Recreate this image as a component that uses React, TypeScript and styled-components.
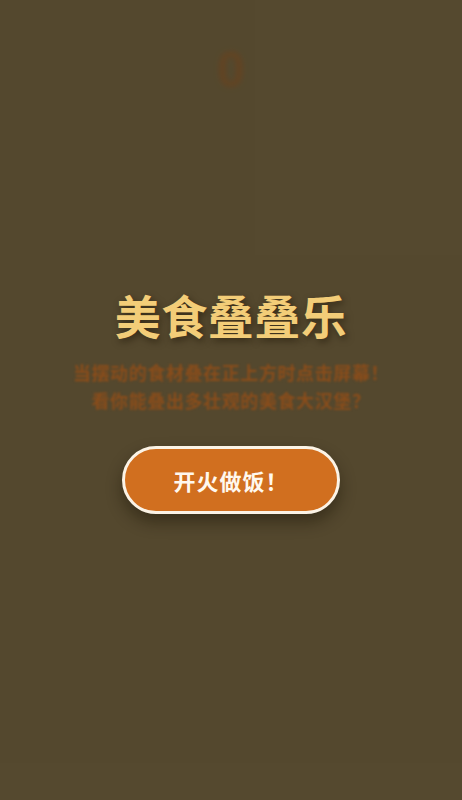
import * as React from 'react'
import styled, { createGlobalStyle } from 'styled-components'

const GlobalStyle = createGlobalStyle`
  html, body {
    margin: 0;
    padding: 0;
    background: #55492e;
  }
  body {
    font-family: "Noto Sans CJK SC", "Noto Sans", sans-serif;
  }
`

export default function App() {
  return (
    <>
      <GlobalStyle />
      <Stage>
        <Game>
          <Score>0</Score>
        </Game>
        <Overlay>
          <Title>美食叠叠乐</Title>
          <Hint>
            当摆动的食材叠在正上方时点击屏幕！
            <br />
            看你能叠出多壮观的美食大汉堡？
          </Hint>
          <StartButton>开火做饭！</StartButton>
        </Overlay>
      </Stage>
    </>
  )
}

const Stage = styled.div`
  position: relative;
  width: 462px;
  height: 800px;
  overflow: hidden;
  background: #574b30;
`

const Game = styled.div`
  display: flex;
  flex-direction: column;
  align-items: center;
  padding-top: 40px;
`

const Score = styled.div`
  font-family: "Liberation Sans", Arial, sans-serif;
  font-size: 50px;
  font-weight: 700;
  line-height: 60px;
  color: #6c431f;
  filter: blur(2.5px);
`

const Overlay = styled.div`
  position: absolute;
  inset: 0;
  display: flex;
  flex-direction: column;
  align-items: center;
  justify-content: center;
  background: rgba(80, 70, 44, 0.35);
`

const Title = styled.h1`
  margin: 0;
  font-size: 46px;
  font-weight: 700;
  line-height: 56px;
  letter-spacing: 0.5px;
  color: #f3cd78;
  text-shadow: 2px 3px 7px rgba(30, 20, 5, 0.55);
`

const Hint = styled.p`
  margin: 16px 0 0;
  font-size: 18px;
  line-height: 28px;
  letter-spacing: 0.6px;
  text-align: center;
  color: #8a4d1b;
  font-weight: 700;
  filter: blur(0.8px);
`

const StartButton = styled.button`
  margin-top: 32px;
  width: 218px;
  height: 68px;
  border: 3px solid #fbf3e6;
  border-radius: 34px;
  background: #d16f1f;
  color: #fff8ee;
  font-family: inherit;
  font-size: 22px;
  font-weight: 700;
  letter-spacing: 1px;
  cursor: pointer;
  box-shadow: 0 8px 16px rgba(25, 18, 5, 0.45);
`
